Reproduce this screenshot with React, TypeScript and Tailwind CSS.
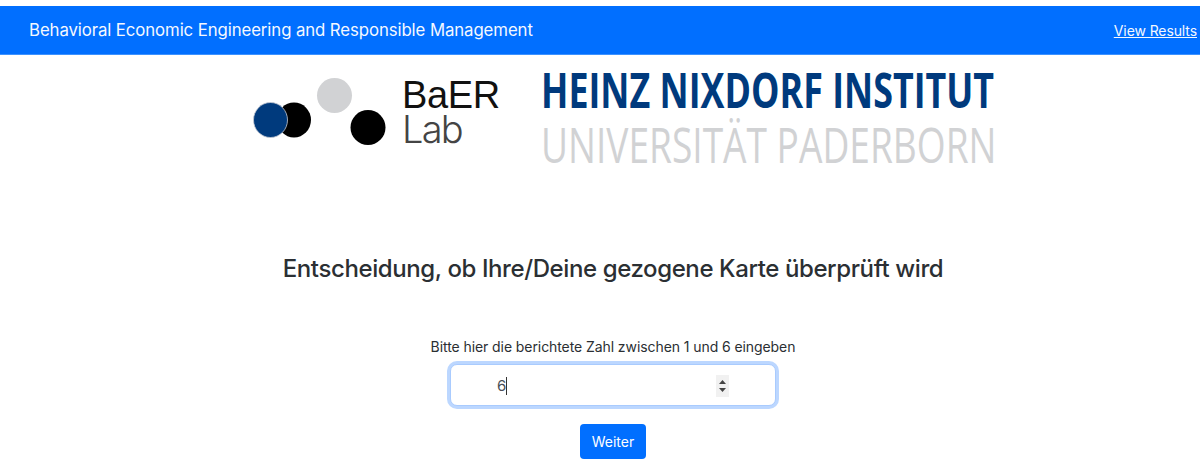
export default function App() {
  return (
    <div className="h-[474px] w-[1200px] overflow-hidden bg-white font-['Inter','Liberation_Sans',sans-serif] text-[#2b2f33]">
      <div className="h-[6px]" />
      <nav className="flex h-[49px] items-center justify-between border-b border-[#3d92ff] bg-[#016fff] pl-[29px] pr-[3px] text-[#f4f8ff]">
        <span className="pt-px text-[16.8px] tracking-[-0.1px]">Behavioral Economic Engineering and Responsible Management</span>
        <a href="#" className="text-[14px] tracking-[-0.1px] underline">View Results</a>
      </nav>
      <div className="flex h-[111px] items-start pl-[253px] pt-[1px]">
        <svg width="248" height="96" viewBox="0 0 248 96" className="mt-[14px] block">
          <ellipse cx="41" cy="50" rx="17" ry="17.5" fill="#000" />
          <ellipse cx="17.5" cy="50" rx="17" ry="17.5" fill="#003a7d" stroke="#c8ccd4" strokeWidth="0.8" />
          <ellipse cx="81.5" cy="25.5" rx="17.5" ry="17.5" fill="#d1d2d4" />
          <ellipse cx="115" cy="57.5" rx="17.5" ry="17.5" fill="#000" />
          <text x="149" y="38" fontFamily="Liberation Sans, sans-serif" fontSize="38" fill="#111" letterSpacing="-0.4">BaER</text>
          <text x="149" y="73" fontFamily="Inter, sans-serif" fontWeight="300" fontSize="38" fill="#444" letterSpacing="-1.8">Lab</text>
        </svg>
        <svg width="456" height="124" viewBox="0 0 456 124" className="ml-[40px] block">
          <text transform="translate(0 52) scale(1 1.361)" fontFamily="Open Sans, sans-serif" fontWeight="700" fontSize="35.85" fill="#003a7d">HEINZ NIXDORF INSTITUT</text>
          <text transform="translate(0 107) scale(1 1.34)" fontFamily="Open Sans, sans-serif" fontWeight="400" fontSize="37.1" fill="#d1d2d4">UNIVERSITÄT PADERBORN</text>
        </svg>
      </div>
      <main className="flex flex-col items-center pl-[26px]">
        <h1 className="mt-[88px] text-[24px] font-medium leading-[29px] tracking-[-0.4px]">Entscheidung, ob Ihre/Deine gezogene Karte überprüft wird</h1>
        <label className="mt-[53px] text-[14px] leading-[21px] tracking-[-0.08px]">Bitte hier die berichtete Zahl zwischen 1 und 6 eingeben</label>
        <div className="mt-[7px] flex h-[42px] w-[326px] items-center rounded-[7px] border border-[#a9cbfe] bg-white pl-[46px] pr-[46px] pt-[2px] text-[15px] shadow-[0_0_0_3px_#bcd7ff]">
          <span className="text-[#495057]">6</span>
          <span className="h-[18px] w-px bg-[#333]" />
          <span className="ml-auto flex h-[22px] w-[13px] flex-col items-center justify-center gap-[4px] bg-[#f1f1f1]">
            <svg width="7" height="4" viewBox="0 0 7 4"><path d="M3.5 0 7 4H0z" fill="#444" /></svg>
            <svg width="7" height="4" viewBox="0 0 7 4"><path d="M3.5 4 7 0H0z" fill="#444" /></svg>
          </span>
        </div>
        <button className="mt-[18px] h-[35px] w-[66px] rounded-[4px] bg-[#016fff] text-[14px] text-white">Weiter</button>
      </main>
    </div>
  );
}
